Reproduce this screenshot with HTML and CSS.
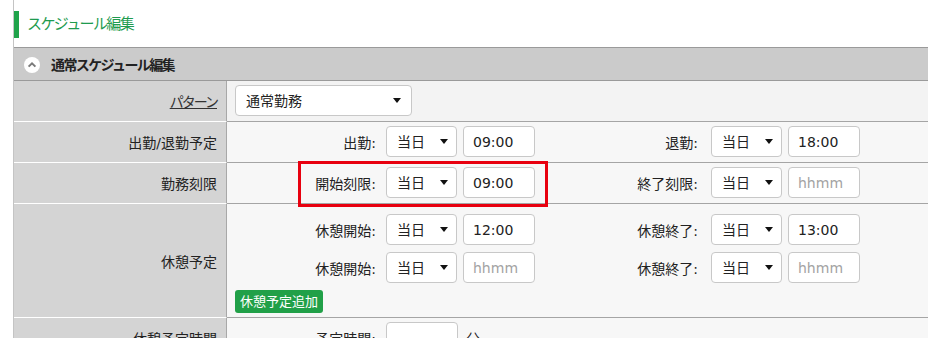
FILE: index.html
```html
<!DOCTYPE html>
<html lang="ja">
<head>
  <meta charset="UTF-8" />
  <title>スケジュール編集</title>
  <link rel="stylesheet" href="styles.css">
</head>
<body>
  <div class="page">
    <h1 class="page-title">スケジュール編集</h1>

    <section class="panel">
      <div class="panel-head">
        <span class="toggle">
          <svg width="16" height="16" viewBox="0 0 16 16"><circle cx="8" cy="8" r="8" fill="#fff"/><path d="M4.6 9.6 L8 6.3 L11.4 9.6" fill="none" stroke="#7a7a7a" stroke-width="2"/></svg>
        </span>
        <span class="head-text">通常スケジュール編集</span>
      </div>

      <table class="form">
        <tr class="row-pattern">
          <th><a href="#">パターン</a></th>
          <td>
            <span class="sel sel-wide"><select><option>通常勤務</option></select></span>
          </td>
        </tr>
        <tr>
          <th>出勤/退勤予定</th>
          <td>
            <div class="line">
              <label class="lbl">出勤:</label>
              <span class="sel"><select><option>当日</option></select></span>
              <input class="time" type="text" value="09:00">
              <label class="lbl lbl-end">退勤:</label>
              <span class="sel"><select><option>当日</option></select></span>
              <input class="time" type="text" value="18:00">
            </div>
          </td>
        </tr>
        <tr>
          <th>勤務刻限</th>
          <td>
            <div class="line">
              <label class="lbl">開始刻限:</label>
              <span class="sel"><select><option>当日</option></select></span>
              <input class="time" type="text" value="09:00">
              <label class="lbl lbl-end">終了刻限:</label>
              <span class="sel"><select><option>当日</option></select></span>
              <input class="time" type="text" placeholder="hhmm">
            </div>
          </td>
        </tr>
        <tr class="row-break">
          <th>休憩予定</th>
          <td>
            <div class="line">
              <label class="lbl">休憩開始:</label>
              <span class="sel"><select><option>当日</option></select></span>
              <input class="time" type="text" value="12:00">
              <label class="lbl lbl-end">休憩終了:</label>
              <span class="sel"><select><option>当日</option></select></span>
              <input class="time" type="text" value="13:00">
            </div>
            <div class="line">
              <label class="lbl">休憩開始:</label>
              <span class="sel"><select><option>当日</option></select></span>
              <input class="time" type="text" placeholder="hhmm">
              <label class="lbl lbl-end">休憩終了:</label>
              <span class="sel"><select><option>当日</option></select></span>
              <input class="time" type="text" placeholder="hhmm">
            </div>
            <button class="btn-add" type="button">休憩予定追加</button>
          </td>
        </tr>
        <tr>
          <th>休憩予定時間</th>
          <td>
            <div class="line">
              <label class="lbl">予定時間:</label>
              <input class="time" type="text">
              <span class="unit">分</span>
            </div>
          </td>
        </tr>
      </table>
    </section>

    <div class="mark"></div>
  </div>
</body>
</html>
```

FILE: styles.css
```css
body {
  margin: 0;
  background-color: #fff;
  color: #222;
  font-family: "DejaVu Sans", "Noto Sans CJK JP", sans-serif;
  font-size: 14px;
  overflow: hidden;
}
.page {
  position: relative;
  margin-left: 13px;
  padding-top: 11px;
  border-left: 1px solid #c4c4c4;
  min-height: 400px;
}
.page-title {
  margin: 0;
  height: 27px;
  line-height: 26px;
  padding-left: 8px;
  border-left: 5px solid #1fa34a;
  font-size: 15px;
  letter-spacing: -1.6px;
  font-weight: normal;
  color: #1f9b4f;
}
.panel {
  margin-top: 9px;
  border-top: 1px solid #9a9a9a;
}
.panel-head {
  display: flex;
  align-items: center;
  height: 32px;
  padding-left: 10px;
  background-color: #cbcbcb;
  border-bottom: 1px solid #9a9a9a;
  font-weight: bold;
  font-size: 14px;
}
.head-text {
  letter-spacing: -1.6px;
}
.toggle {
  display: flex;
  margin-right: 11px;
  margin-top: 1px;
}
.form {
  width: 100%;
  border-spacing: 0;
}
.form th, .form td {
  box-sizing: border-box;
}
.form th {
  width: 213px;
  padding: 0 9px 0 0;
  text-align: right;
  font-weight: normal;
  vertical-align: middle;
  background-color: #d4d4d4;
  border-right: 1px solid #a8a8a8;
  border-bottom: 1px solid #fff;
}
.form th a {
  color: #333;
  letter-spacing: -2px;
}
.form td {
  padding: 4px 8px 5px;
  background-color: #f7f7f7;
  border-bottom: 1px solid #a5a5a5;
  vertical-align: top;
}
.row-pattern td {
  background-color: #f3f3f3;
}
.row-break td {
  padding-top: 10px;
  padding-bottom: 4px;
}
.line {
  display: flex;
  align-items: center;
}
.row-break .line + .line {
  margin-top: 7px;
}
.lbl {
  width: 151px;
  padding-right: 10px;
  box-sizing: border-box;
  text-align: right;
  white-space: nowrap;
}
.lbl-end {
  width: 176px;
  padding-right: 13px;
}
.sel {
  position: relative;
  display: inline-block;
}
.sel::after {
  content: "";
  position: absolute;
  right: 9px;
  top: 13px;
  border-left: 4px solid transparent;
  border-right: 4px solid transparent;
  border-top: 5px solid #111;
  pointer-events: none;
}
.sel select {
  appearance: none;
  width: 71px;
  height: 31px;
  padding: 0 0 0 10px;
  border: 1px solid #c8c8c8;
  border-radius: 4px;
  background-color: #fff;
  color: #222;
  font-family: inherit;
  font-size: 14px;
}
.sel-wide select {
  width: 177px;
}
.sel-wide::after {
  right: 11px;
}
.time {
  width: 72px;
  height: 31px;
  margin-left: 6px;
  padding: 0 0 0 9px;
  box-sizing: border-box;
  border: 1px solid #c8c8c8;
  border-radius: 4px;
  background-color: #fff;
  color: #222;
  font-family: inherit;
  font-size: 14px;
}
.time::placeholder {
  color: #a3a3a3;
}
.lbl + .time {
  margin-left: 0;
}
.unit {
  margin-left: 8px;
}
.btn-add {
  display: block;
  margin-top: 7px;
  height: 23px;
  padding: 0 5px;
  border: none;
  border-radius: 3px;
  background-color: #21a048;
  color: #fff;
  font-family: inherit;
  font-size: 13px;
  line-height: 23px;
}
.mark {
  position: absolute;
  left: 284px;
  top: 161px;
  width: 250px;
  height: 46px;
  box-sizing: border-box;
  border: 3px solid #e8000f;
}
```
